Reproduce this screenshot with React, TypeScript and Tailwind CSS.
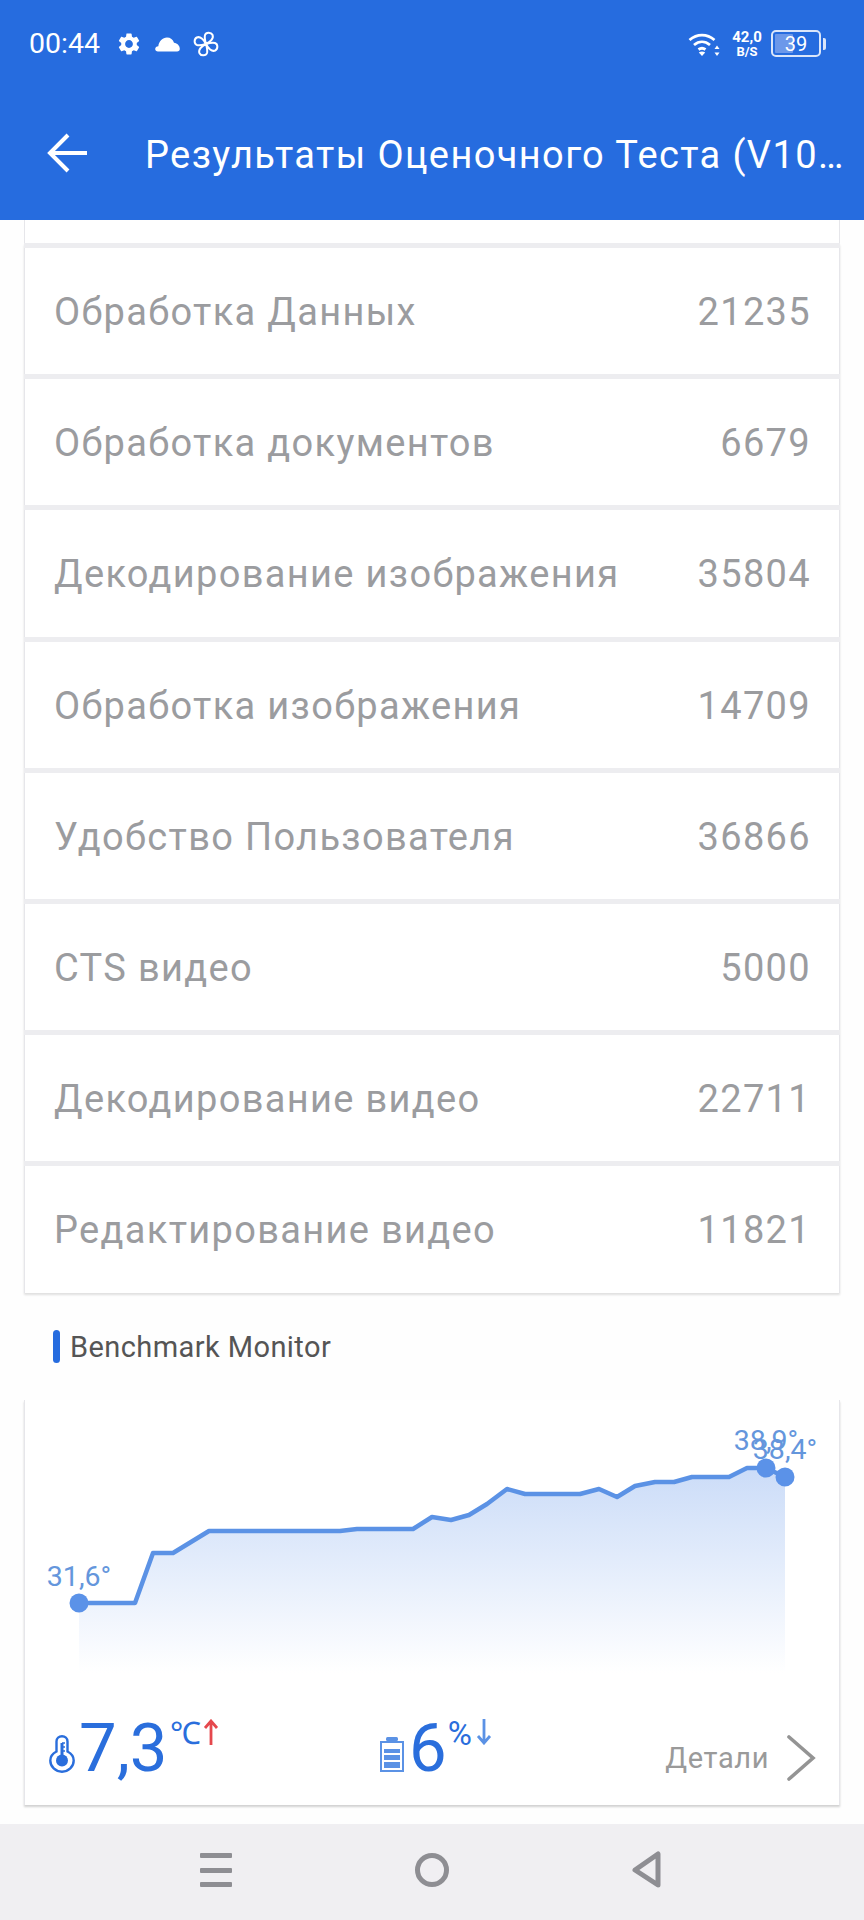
import { MdSettings } from 'react-icons/md'

const scores = [
  { name: 'Обработка Данных', value: 21235 },
  { name: 'Обработка документов', value: 6679 },
  { name: 'Декодирование изображения', value: 35804 },
  { name: 'Обработка изображения', value: 14709 },
  { name: 'Удобство Пользователя', value: 36866 },
  { name: 'CTS видео', value: 5000 },
  { name: 'Декодирование видео', value: 22711 },
  { name: 'Редактирование видео', value: 11821 },
]

const temps = [
  [55, 203], [111, 203], [129, 153], [149, 153], [185, 131], [316, 131], [333, 129],
  [389, 129], [408, 117], [427, 120], [445, 115], [463, 104], [483, 89], [501, 94],
  [556, 94], [575, 89], [593, 97], [611, 86], [631, 82], [650, 82], [668, 77],
  [705, 77], [723, 68], [742, 68], [761, 77],
]

function CloudIcon() {
  return (
    <svg width="25" height="16" viewBox="0 0 25 16" fill="white">
      <path d="M3 15.500C1.300 15.500 0.200 14.400 0.200 13C0.200 11.400 1.500 10.300 3.300 10.200C4 5 7.500 1.500 12 1.500C15.500 1.500 18 3.500 19 6.800C22.300 7.300 24.800 9.800 24.800 12.800C24.800 14.500 23.800 15.500 22 15.500Z" />
    </svg>
  )
}

function FanIcon() {
  return (
    <svg width="26" height="26" viewBox="0 0 26 26" fill="none" stroke="white" strokeWidth="2">
      {[0, 90, 180, 270].map((deg) => (
        <path
          key={deg}
          transform={`rotate(${deg} 13 13)`}
          d="M13 13C12 9.500 11.300 6.500 12 4C13 1 18 0.800 19.500 3.800C21 7 17.500 11 13 13Z"
        />
      ))}
    </svg>
  )
}

function WifiIcon() {
  return (
    <svg width="32" height="26" viewBox="0 0 32 26" fill="none" stroke="white" strokeWidth="2.800">
      <path d="M1.500 9C9 2.500 19 2.500 26.500 9" />
      <path d="M6 14C11 9.800 17 9.800 22 14" />
      <path d="M10.500 18.500C13 16.700 15 16.700 17.500 18.500" />
      <path d="M14 25L10.800 21.500C13 20.200 15 20.200 17.200 21.500Z" fill="white" stroke="none" />
      <path d="M29 14.500L31.500 18H26.500Z" fill="white" stroke="none" />
      <path d="M29 25L31.500 21.500H26.500Z" fill="white" stroke="none" />
    </svg>
  )
}

function StatusBar() {
  return (
    <div className="flex h-[84px] items-center pl-[29px] pr-[38px] pt-[3px] text-white">
      <span className="pt-[2px] text-[28.500px] leading-none">00:44</span>
      <MdSettings className="ml-[16px] text-[26px]" />
      <div className="ml-[13px]">
        <CloudIcon />
      </div>
      <div className="ml-[13px]">
        <FanIcon />
      </div>
      <div className="ml-auto flex items-center">
        <WifiIcon />
        <div className="ml-[11px] flex w-[32px] flex-col items-center font-bold leading-none">
          <span className="text-[15px] leading-[15px]">42,0</span>
          <span className="text-[13px] leading-[13px]">B/S</span>
        </div>
        <div className="relative ml-[8px] flex h-[27px] w-[50px] items-center justify-center rounded-[5px] border-2 border-[#dbe6fa]">
          <div className="absolute bottom-[2px] left-[2px] top-[2px] w-[18px] rounded-[1px] bg-[#6c98ea]" />
          <span className="relative text-[20px] leading-none">39</span>
        </div>
        <div className="ml-[2px] h-[12px] w-[3px] rounded-r-[2px] bg-[#dbe6fa]" />
      </div>
    </div>
  )
}

function Toolbar() {
  return (
    <div className="flex h-[136px] items-start pl-[47px] pr-[18px] pt-[46px] text-white">
      <svg className="mt-[2px] shrink-0" width="42" height="42" viewBox="0 0 42 42" fill="none" stroke="white" strokeWidth="4">
        <path d="M40 21H3M21 3L3 21L21 39" />
      </svg>
      <h1 className="ml-[56px] truncate text-[38px] font-normal leading-[50px] tracking-[1.380px]">
        Результаты Оценочного Теста (V10.1.0)
      </h1>
    </div>
  )
}

function ScoreRow({ name, value }: { name: string; value: number }) {
  return (
    <div className="flex h-[126.200px] items-center justify-between border-x border-[#e6e6ea] bg-white pl-[29px] pr-[28px] pt-[3px] text-[38px] tracking-[1.330px] text-[#9b9c9f]">
      <span>{name}</span>
      <span>{value}</span>
    </div>
  )
}

function TempChart() {
  const line = temps.map(([x, y]) => `${x},${y}`).join(' ')
  const area = `55,273 ${line} 761,273`
  return (
    <svg width="814" height="280" viewBox="1 0 814 280" className="block">
      <defs>
        <linearGradient id="tempFill" x1="0" y1="0" x2="0" y2="1">
          <stop offset="0" stopColor="#cbdcf8" />
          <stop offset="1" stopColor="#ffffff" />
        </linearGradient>
      </defs>
      <polygon points={area} fill="url(#tempFill)" />
      <polyline points={line} fill="none" stroke="#5b92e5" strokeWidth="4.500" strokeLinejoin="round" />
      <circle cx="55" cy="203" r="9.500" fill="#5b92e8" />
      <circle cx="742" cy="68" r="9.500" fill="#5b92e8" />
      <circle cx="761" cy="77" r="9.500" fill="#5b92e8" />
      <g fill="#6496dc" fontSize="28.500" textAnchor="middle">
        <text x="55" y="186">31,6°</text>
        <text x="742" y="50">38,9°</text>
        <text x="761" y="59">38,4°</text>
      </g>
    </svg>
  )
}

function Thermometer() {
  return (
    <svg width="26" height="38" viewBox="0 0 26 38" fill="none" stroke="#2a6edc" strokeWidth="2.400">
      <path d="M7.500 6.500C7.500 3.200 10 1.300 13 1.300C16 1.300 18.500 3.200 18.500 6.500V16.500C22.300 18.500 24.700 21.600 24.700 25.400C24.700 31.800 19.500 36.700 13 36.700C6.500 36.700 1.300 31.800 1.300 25.400C1.300 21.600 3.700 18.500 7.500 16.500Z" />
      <circle cx="13" cy="25.500" r="6" fill="#2a6edc" stroke="none" />
      <path d="M13 8V22" strokeWidth="3" />
      <path d="M13 8H16M13 12H16M13 16H16" strokeWidth="1.400" />
    </svg>
  )
}

function BatteryGlyph() {
  return (
    <svg width="24" height="35" viewBox="0 0 24 35" fill="none">
      <rect x="6" y="0" width="12" height="4" rx="1.500" fill="#5b92e5" />
      <rect x="1" y="5" width="22" height="29" stroke="#5b92e5" strokeWidth="2" />
      <rect x="4" y="12" width="16" height="4" fill="#5b92e5" />
      <rect x="4" y="18" width="16" height="5" fill="#5b92e5" />
      <rect x="4" y="25" width="16" height="6" fill="#5b92e5" />
    </svg>
  )
}

function MonitorFooter() {
  return (
    <div className="flex h-[125px] items-start pt-[36px]">
      <div className="flex w-[355px] items-start pl-[24px]">
        <div className="mt-[19px]">
          <Thermometer />
        </div>
        <span className="ml-[4px] text-[67px] leading-[64px] text-[#2a6edc]">7,3</span>
        <span className="ml-[2px] text-[31px] leading-[36px] text-[#2a6edc]">℃</span>
        <svg className="ml-[2px] mt-[3px]" width="16" height="26" viewBox="0 0 16 26" fill="none" stroke="#e5484d" strokeWidth="2.800">
          <path d="M8 26V2M2 9L8 2L14 9" />
        </svg>
      </div>
      <div className="flex items-start">
        <div className="mt-[21px]">
          <BatteryGlyph />
        </div>
        <span className="ml-[5px] text-[67px] leading-[64px] text-[#2a6edc]">6</span>
        <span className="ml-[1px] text-[33px] leading-[36px] text-[#2a6edc]">%</span>
        <svg className="ml-[4px] mt-[3px]" width="16" height="26" viewBox="0 0 16 26" fill="none" stroke="#5b92e5" strokeWidth="2.800">
          <path d="M8 0V24M2 17L8 24L14 17" />
        </svg>
      </div>
      <div className="ml-auto flex items-center pr-[23px] pt-[19px]">
        <span className="text-[29px] leading-[44px] tracking-[0.6px] text-[#9a9a9a]">Детали</span>
        <svg className="ml-[17px]" width="30" height="46" viewBox="0 0 30 46" fill="none" stroke="#949494" strokeWidth="3.600" strokeLinecap="round">
          <path d="M3 2L27 23L3 44" />
        </svg>
      </div>
    </div>
  )
}

function NavBar() {
  return (
    <div className="flex h-[96px] shrink-0 items-start bg-[#f0eff2] pt-[29px]">
      <div className="ml-[200px] flex w-[32px] flex-col gap-[9.500px]">
        <div className="h-[5px] rounded-[1px] bg-[#8e8e93]" />
        <div className="h-[5px] rounded-[1px] bg-[#8e8e93]" />
        <div className="h-[5px] rounded-[1px] bg-[#8e8e93]" />
      </div>
      <div className="ml-[183px] h-[34px] w-[34px] rounded-full border-[5px] border-[#8e8e93]" />
      <svg className="ml-[183px] -mt-[2px]" width="30" height="38" viewBox="0 0 30 38" fill="none" stroke="#8e8e93" strokeWidth="5" strokeLinejoin="round">
        <path d="M26 3V34L3 19Z" />
      </svg>
    </div>
  )
}

export default function App() {
  return (
    <div className="flex h-[1920px] w-[864px] flex-col overflow-hidden bg-[#fefefe] font-['Roboto',sans-serif]">
      <header className="shrink-0 bg-[#266cdf]">
        <StatusBar />
        <Toolbar />
      </header>

      <main className="flex-1 px-[24px]">
        <div className="h-[23px] border-x border-[#e6e6ea] bg-white" />
        <div className="flex flex-col gap-[5px] bg-[#ededf0] pt-[5px] shadow-[0_2px_2px_rgba(0,0,0,0.12)]">
          {scores.map((row) => (
            <ScoreRow key={row.name} name={row.name} value={row.value} />
          ))}
        </div>

        <div className="flex h-[107px] items-center gap-[10px] pl-[29px] pt-[1px]">
          <div className="h-[33px] w-[7px] rounded-full bg-[#266cdf]" />
          <span className="pt-[3px] text-[29px] tracking-[0.42px] text-[#555555]">Benchmark Monitor</span>
        </div>

        <section className="border-x border-[#e6e6ea] bg-white shadow-[0_2px_2px_rgba(0,0,0,0.18)]">
          <TempChart />
          <MonitorFooter />
        </section>
      </main>

      <NavBar />
    </div>
  )
}
